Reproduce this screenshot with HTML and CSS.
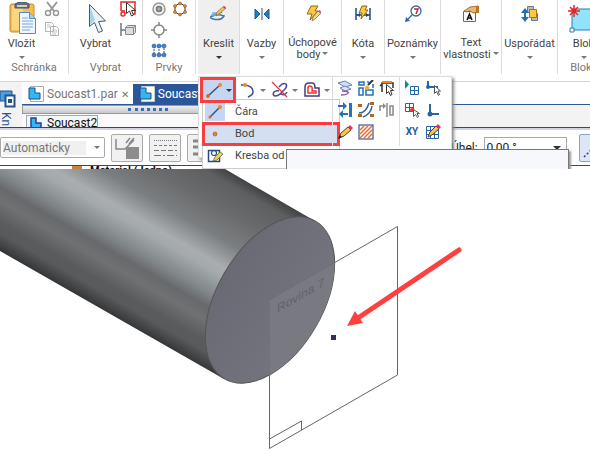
FILE: index.html
```html
<!DOCTYPE html>
<html lang="cs">
<head>
    <meta charset="UTF-8">
    <title>Soucast2</title>
    <link rel="stylesheet" href="styles.css">
</head>
<body>
    <div class="chrome">
        <div class="ribbon">
            <div class="group clipboard">
                <div class="group-body">
                    <button class="big">
                        <svg width="32" height="32" viewBox="0 0 32 32">
                            <rect x="4" y="2" width="24" height="28" rx="2" fill="#f5bd55" stroke="#c98a2c"/>
                            <rect x="6" y="4" width="11" height="24" fill="#fbd680"/>
                            <path d="M9 6V2l4-2h6l4 2v4z" fill="#66707c" stroke="#4c5560"/>
                            <path d="M11 4h10" stroke="#c8d0d8" stroke-width="2"/>
                            <path d="M13.500 10.500h10l6 6v15h-16z" fill="#eef6ff" stroke="#4d8ecb"/>
                            <path d="M23.500 10.500v6h6" fill="#a9cdf0" stroke="#4d8ecb"/>
                            <path d="M16 16h6M16 19h11M16 22h11M16 25h11M16 28h8" stroke="#7ba9dc"/>
                        </svg>
                        <span>Vložit</span>
                        <i class="caret"></i>
                    </button>
                    <div class="smalls">
                        <button aria-label="Vyjmout"><svg width="16" height="16" viewBox="0 0 16 16"><path d="M3 1l7 9M13 1l-7 9" stroke="#999" stroke-width="2"/><circle cx="4" cy="12" r="2.500" fill="none" stroke="#999" stroke-width="1.500"/><circle cx="12" cy="12" r="2.500" fill="none" stroke="#999" stroke-width="1.500"/></svg></button>
                        <button aria-label="Kopírovat"><svg width="16" height="16" viewBox="0 0 16 16"><path d="M1.500 1.500h6l2 2v7h-8zM6.500 5.500h6l2 2v7h-8z" fill="#fff" stroke="#b4b4b4"/><path d="M3 4h3M3 6h3M8 9h5M8 11h5M8 13h4" stroke="#c4c4c4"/></svg></button>
                    </div>
                </div>
                <div class="caption">Schránka</div>
            </div>
            <div class="group choose">
                <div class="group-body">
                    <button class="big">
                        <svg width="32" height="32" viewBox="0 0 32 32"><path d="M9.500 2.500v22l5-4 4 10 4-1.500-4-9.500 7-.5z" fill="#eaf4fa" stroke="#4b5a66"/><path d="M10 4v19l5-5z" fill="#a8d4e8"/></svg>
                        <span>Vybrat</span>
                    </button>
                    <div class="smalls">
                        <button aria-label="Filtr výběru"><svg width="16" height="16" viewBox="0 0 16 16"><path d="M1 10V1h14v12h-3M1 10h4" fill="none" stroke="#e22" stroke-width="1.500"/><circle cx="3" cy="13" r="2" fill="none" stroke="#e22" stroke-width="1.500"/><path d="M6.500 1.500v11l3-2.500 2 5 2-1-2-4.500h4z" fill="#fff" stroke="#333"/></svg></button>
                        <button aria-label="Výběr plochy"><svg width="16" height="16" viewBox="0 0 16 16"><path d="M1 2v13M1 9h5" stroke="#777" stroke-width="1.500"/><path d="M5.500 6.500l2-2h8v7l-2 2h-8z" fill="#ddd" stroke="#888"/><path d="M5.500 6.500h8v7M13.500 6.500l2-2" fill="none" stroke="#888"/></svg></button>
                    </div>
                </div>
                <div class="caption">Vybrat</div>
            </div>
            <div class="group features">
                <div class="group-body feature-grid">
                    <button aria-label="Tělesa"><svg width="16" height="16" viewBox="0 0 16 16"><circle cx="8" cy="8" r="6" fill="#f0f0f0" stroke="#999" stroke-width="1.500"/><circle cx="8" cy="8" r="2.500" fill="#aaa" stroke="#777" stroke-width="1.500"/></svg></button>
                    <button aria-label="Vrcholy"><svg width="16" height="16" viewBox="0 0 16 16"><path d="M8 2l5 3v6l-5 3-5-3V5z" fill="none" stroke="#333"/><g fill="#e8862c" stroke="#8a4a12" stroke-width=".5"><circle cx="8" cy="2.500" r="1.500"/><circle cx="13" cy="5" r="1.500"/><circle cx="13" cy="11" r="1.500"/><circle cx="8" cy="13.500" r="1.500"/><circle cx="3" cy="11" r="1.500"/><circle cx="3" cy="5" r="1.500"/></g></svg></button>
                    <button aria-label="Střed"><svg width="16" height="16" viewBox="0 0 16 16"><circle cx="8" cy="8" r="5" fill="none" stroke="#888" stroke-width="1.500"/><path d="M8 0v4M8 12v4M0 8h4M12 8h4" stroke="#888" stroke-width="1.500"/></svg></button>
                    <span></span>
                    <button aria-label="Síť bodů"><svg width="16" height="16" viewBox="0 0 16 16"><path d="M3 3h10v9H3zM8 3v9" fill="none" stroke="#357" stroke-dasharray="2 1"/><g fill="#3f82d0" stroke="#1c4a8c" stroke-width=".5"><circle cx="3" cy="3" r="2"/><circle cx="8" cy="3" r="2"/><circle cx="13" cy="3" r="2"/><circle cx="3" cy="12" r="2"/><circle cx="8" cy="12" r="2"/><circle cx="13" cy="12" r="2"/></g></svg></button>
                </div>
                <div class="caption">Prvky</div>
            </div>
            <div class="group draw">
                <button class="tool">
                    <svg width="18" height="18" viewBox="0 0 18 18"><path d="M1 12q5-4 13-1-3 5-11 3t9-7" fill="none" stroke="#3a78b8" stroke-width="1.500"/><path d="M2 8h6M1 10h5" stroke="#7fb0dc" stroke-width="1.500"/><path d="M6 11l1-4 7-6 2 2-7 6z" fill="#f4c451" stroke="#8a6a30" stroke-width=".7"/><path d="M13 2l1-1 2 2-1 1z" fill="#e0368c"/></svg>
                    <span>Kreslit</span>
                    <i class="caret dark"></i>
                </button>
                <div class="popup">
                    <div class="splits">
                        <button class="split marked" aria-label="Čára"><svg width="18" height="18" viewBox="0 0 18 18"><path d="M3 15L15 4" stroke="#3a4a8c" stroke-width="1.500"/><circle cx="3" cy="15" r="2" fill="#d9701c"/><circle cx="15" cy="4" r="2" fill="#ef8a28"/></svg><i class="caret dark"></i></button>
                        <button class="split" aria-label="Oblouk"><svg width="18" height="18" viewBox="0 0 18 18"><path d="M2 4h4q8 1 8 7 0 3-5 5" fill="none" stroke="#4a4a90" stroke-width="1.500"/><circle cx="6" cy="4" r="2" fill="#f08a24"/></svg><i class="caret"></i></button>
                        <button class="split" aria-label="Křivka"><svg width="18" height="18" viewBox="0 0 18 18"><path d="M8 6q4-5 7-3 2 3-3 7-4 5-8 5-3-1-1-4 2-2 5-1M10 13q4 2 6-2" fill="none" stroke="#4a4a90" stroke-width="1.500"/><path d="M1 1l15 15" stroke="#e33" stroke-width="1.200"/></svg><i class="caret"></i></button>
                        <button class="split" aria-label="Odsazení"><svg width="18" height="18" viewBox="0 0 18 18"><path d="M2 15V6q0-4 4-4h3q3 0 3 5h4v8z" fill="none" stroke="#4a3a80" stroke-width="1.500"/><path d="M5 12V7q0-2 2-2 3 0 2 5h4v2z" fill="none" stroke="#e33" stroke-width="1.500"/></svg><i class="caret"></i></button>
                    </div>
                    <div class="grid three">
                        <button aria-label="Promítnout"><svg width="16" height="16" viewBox="0 0 16 16"><path d="M1 3l7-2 7 4-7 2z" fill="#cfe0f2" stroke="#6484b4"/><path d="M3 8l5-2 6 3-6 2z" fill="#dce8f6" stroke="#6484b4"/><path d="M5 11q7 0 6 2t-7 2" fill="none" stroke="#9655a8" stroke-width="1.500"/></svg></button>
                        <button aria-label="Zahrnout"><svg width="16" height="16" viewBox="0 0 16 16"><path d="M1 2h5v3H1zM1 8h4v7H1zM8 10h7v5H8z" fill="none" stroke="#2473b8" stroke-width="1.500"/><path d="M6 8l3-3 3 3-3 2z" fill="#f0b13a"/><path d="M10 5l5-5" stroke="#333" stroke-width="2"/><path d="M9 2h2M15 4v4" fill="none" stroke="#2473b8" stroke-width="1.500"/></svg></button>
                        <button aria-label="Oříznout"><svg width="16" height="16" viewBox="0 0 16 16"><path d="M3 12V3h11v5M1 6l4-4" fill="none" stroke="#333" stroke-width="1.500"/><path d="M3 2h10" stroke="#e8862c" stroke-width="2"/><path d="M7.500 4.500v9l2-2 2 4 1.500-1-1.500-4h3z" fill="#fff" stroke="#333"/></svg></button>
                        <button aria-label="Symetrie"><svg width="16" height="16" viewBox="0 0 16 16"><path d="M12 1h3v14h-3z" fill="#2473b8"/><path d="M1 4h6M4 12h7" stroke="#2473b8" stroke-width="2"/><path d="M6 0v8l4-4zM6 8v8l-4-4z" fill="#2473b8"/></svg></button>
                        <button aria-label="Posunout"><svg width="16" height="16" viewBox="0 0 16 16"><path d="M1 11q7 0 10-10M5 15q8-3 9-11" fill="none" stroke="#2864a8" stroke-width="1.500"/><path d="M0 2h4v3H0zM12 0h4v3h-4zM0 12h4v3H0zM12 12h4v3h-4z" fill="#a66a24"/></svg></button>
                        <button aria-label="Zrcadlit"><svg width="16" height="16" viewBox="0 0 16 16"><path d="M8 1v14" stroke="#888" stroke-width="1.500"/><path d="M1 9V4h4M11 4h3v9h-3z" fill="none" stroke="#888" stroke-width="1.500"/><path d="M4 1l3 3-3 3z" fill="#888"/></svg></button>
                        <button aria-label="Tužka"><svg width="16" height="16" viewBox="0 0 16 16"><path d="M2 14l2-5 7-6 3 3-7 6z" fill="#f4c451" stroke="#5c4218"/><path d="M11 3l2-2 3 3-2 2z" fill="#e82a78"/><path d="M1 15l1.500-4L5 13z" fill="#222"/></svg></button>
                        <button aria-label="Výplň"><svg width="16" height="16" viewBox="0 0 16 16"><rect x="1" y="1" width="14" height="14" fill="#fff4ec" stroke="#3a5a9a" stroke-width="1.200"/><path d="M2 6l4-4M2 10l8-8M2 14L14 2M6 14l8-8M10 14l4-4" stroke="#e06a30" stroke-width="1.300"/></svg></button>
                    </div>
                    <div class="grid two">
                        <button aria-label="Zarovnat na mřížku"><svg width="16" height="16" viewBox="0 0 16 16"><path d="M1 0v9l4-4.500z" fill="#138a8a"/><path d="M6.500 6.500h8v8h-8zM10.500 6.500v8M6.500 10.500h8" fill="none" stroke="#2864a8"/></svg></button>
                        <button aria-label="Počátek"><svg width="16" height="16" viewBox="0 0 16 16"><path d="M3 1v6h10" fill="none" stroke="#2864a8" stroke-width="2"/><circle cx="3" cy="7" r="2" fill="#2864a8"/><path d="M9.500 5.500v8l2-2 2 4 1-1-1.500-3.500h2.500z" fill="#fff" stroke="#555"/></svg></button>
                        <button aria-label="Mřížka"><svg width="16" height="16" viewBox="0 0 16 16"><path d="M1.500 1.500h8v8h-8zM5.500 1.500v8M1.500 5.500h8" fill="none" stroke="#2864a8"/><circle cx="8" cy="8" r="2" fill="#e33"/><path d="M9.500 7.500v7l2-2 2 3 1-1-1.500-3h2.500z" fill="#fff" stroke="#555"/></svg></button>
                        <button aria-label="Nulový bod"><svg width="16" height="16" viewBox="0 0 16 16"><path d="M5 2v10h9" fill="none" stroke="#2864a8" stroke-width="2"/><circle cx="5" cy="12" r="2.500" fill="#2864a8"/></svg></button>
                        <button class="xy">XY</button>
                        <button aria-label="Upravit mřížku"><svg width="16" height="16" viewBox="0 0 16 16"><path d="M1.500 2.500h12v12h-12zM5.500 2.500v12M9.500 2.500v12M1.500 6.500h12M1.500 10.500h12" fill="none" stroke="#2864a8"/><path d="M3 13l2-5 6-6 3 3-7 6z" fill="#f4c451" stroke="#5c4218"/><path d="M11 2l2-2 3 3-2 2z" fill="#e82a78"/></svg></button>
                    </div>
                    <div class="menu">
                        <button class="item"><span class="item-icon lit"><svg width="18" height="18" viewBox="0 0 18 18"><path d="M4 14L14 4" stroke="#3a4a8c" stroke-width="1.500"/><circle cx="4" cy="14" r="1.500" fill="#d9701c"/><circle cx="14" cy="4" r="2" fill="#ef8a28"/></svg></span>Čára</button>
                        <button class="item marked"><span class="item-icon"><svg width="18" height="18" viewBox="0 0 18 18"><circle cx="9" cy="9" r="2" fill="#d9853c" stroke="#a3541c" stroke-width=".6"/></svg></span>Bod</button>
                        <button class="item"><span class="item-icon"><svg width="18" height="18" viewBox="0 0 18 18"><path d="M2.500 3.500h11v11h-11z" fill="#fff" stroke="#274b80" stroke-width="1.500"/><circle cx="8" cy="6" r="2.500" fill="none" stroke="#274b80" stroke-width="1.200"/><path d="M7 14l2-4 5-5 3 2-6 6z" fill="#f0d24c" stroke="#555" stroke-width=".7"/></svg></span>Kresba od ruky</button>
                    </div>
                </div>
            </div>
            <div class="group relate">
                <button class="tool">
                    <svg width="18" height="18" viewBox="0 0 18 18"><path d="M2 4v10l5-5z" fill="#1c7fc4" stroke="#27548c"/><path d="M16 4v10l-5-5z" fill="#1c7fc4" stroke="#27548c"/><path d="M9 3v12" stroke="#27548c"/></svg>
                    <span>Vazby</span>
                    <i class="caret"></i>
                </button>
            </div>
            <div class="group snap">
                <button class="tool two-line">
                    <svg width="18" height="18" viewBox="0 0 18 18"><path d="M7 1h7l-3 5h3l-8 9 2-6H3z" fill="#ffc83a" stroke="#8c6a20"/><path d="M8 16l1-4 5-6 3 2-6 6z" fill="#f7d58c" stroke="#8a6a50" stroke-width=".8"/><path d="M14 6l2-1 1 2-1 1z" fill="#d84a68"/></svg>
                    <span>Úchopové<br>body<i class="caret"></i></span>
                </button>
            </div>
            <div class="group dim">
                <button class="tool">
                    <svg width="18" height="18" viewBox="0 0 18 18"><path d="M2 3v12M16 3v12M2 10h14" stroke="#1c4a80" stroke-width="1.500"/><path d="M3 10l3-2v4zM15 10l-3-2v4z" fill="#1c4a80"/><path d="M8 1h5l-2 4h3l-7 9 1-6H5z" fill="#ffc83a" stroke="#8c6a20"/></svg>
                    <span>Kóta</span>
                    <i class="caret"></i>
                </button>
            </div>
            <div class="group notes">
                <button class="tool">
                    <svg width="18" height="18" viewBox="0 0 18 18"><circle cx="12" cy="6" r="5" fill="#fff" stroke="#2c68ac" stroke-width="1.300"/><path d="M8 10l-6 6" stroke="#2c68ac" stroke-width="1.300"/><path d="M1 17l1-5 4 4z" fill="#2c68ac"/><path d="M10 4h4l-2 5" fill="none" stroke="#c22" stroke-width="1.500"/></svg>
                    <span>Poznámky</span>
                    <i class="caret"></i>
                </button>
            </div>
            <div class="group textprops">
                <button class="tool two-line">
                    <svg width="18" height="18" viewBox="0 0 18 18"><path d="M1.500 6.500h12v10h-12z" fill="#fff" stroke="#2c78b8"/><path d="M2 6l6-4 8-1v6l-5 1-3-2-4 1z" fill="#eab676" stroke="#8a5a28" stroke-width=".8"/><path d="M14 1h3v7h-3z" fill="#b87824"/><path d="M5 15l2.500-6L10 15M6 13h3" fill="none" stroke="#111" stroke-width="1.500"/></svg>
                    <span>Text<br>vlastnosti<i class="caret"></i></span>
                </button>
            </div>
            <div class="group arrange">
                <button class="tool">
                    <svg width="18" height="18" viewBox="0 0 18 18"><path d="M6.500 1.500h6v6h-6zM12.500 8.500h4v7h-6v-3" fill="#bbb" stroke="#777"/><path d="M8.500 4.500h7v8h-7z" fill="#ffcc3c" stroke="#a07414"/><path d="M4 6v8" stroke="#2272c0" stroke-width="2"/><path d="M0 8l4-5 4 5zM0 12l4 5 4-5z" fill="#2272c0"/></svg>
                    <span>Uspořádat</span>
                    <i class="caret"></i>
                </button>
            </div>
            <div class="group blocks">
                <button class="tool">
                    <svg width="34" height="30" viewBox="0 0 34 30"><path d="M5 4h28v21H5z" fill="#8fe4fb" stroke="#2c78b8"/><path d="M3 23h4v4H3z" fill="#fff" stroke="#2c78b8"/><path d="M7 0v12M1 6h12M3 2l8 8M11 2l-8 8" stroke="#e22" stroke-width="1.500"/></svg>
                    <span>Blok</span>
                    <i class="caret"></i>
                </button>
                <div class="caption">Bloky</div>
            </div>
        </div>

        <div class="workspace">
            <div class="side">
                <svg width="16" height="18" viewBox="0 0 16 18"><path d="M0 1h12v10H0z" fill="#4b9fe0" stroke="#24508c"/><path d="M5.500 5.500h9v11h-9z" fill="#fff" stroke="#24508c" stroke-width="2"/><path d="M8 9h4v4H8z" fill="#24508c"/></svg>
                <span>Knihovna</span>
            </div>
            <div class="docs">
                <div class="tabs">
                    <button class="tab"><svg width="16" height="16" viewBox="0 0 16 16"><path d="M2.500 .5h13v15h-13z" fill="#fff" stroke="#aaa"/><path d="M1 2h6v5h5v6H1z" fill="#35b5f2" stroke="#1c4d8c"/></svg>Soucast1.par<span class="close">✕</span></button>
                    <button class="tab active"><svg width="16" height="16" viewBox="0 0 16 16"><path d="M2.500 .5h13v15h-13z" fill="#fff" stroke="#ccc"/><path d="M1 2h6v5h5v6H1z" fill="#35b5f2" stroke="#1c4d8c"/></svg>Soucast2.par</button>
                </div>
                <div class="dock">
                    <div class="grip"></div>
                    <div class="doc-name"><span><svg width="12" height="12" viewBox="0 0 12 12"><path d="M1 1h5v5h5v6H1z" fill="#35b5f2" stroke="#2a3f9c" stroke-width="1.500"/></svg>Soucast2</span></div>
                </div>
            </div>
        </div>

        <div class="options">
            <label class="combo auto"><select disabled aria-label="Styl"><option>Automaticky</option></select><i class="caret"></i></label>
            <button class="option" aria-label="Barva čáry"><svg width="26" height="24" viewBox="0 0 26 24"><path d="M2 3v10h9l9-9M12 7l4-5M15 8l5-6" fill="none" stroke="#888" stroke-width="1.500"/><path d="M12 11h13v12H12z" fill="#8c8c8c"/></svg></button>
            <button class="option" aria-label="Typ čáry"><svg width="26" height="24" viewBox="0 0 26 24"><path d="M2 4.500h23" stroke="#777" stroke-dasharray="1 1"/><path d="M2 9.500h23" stroke="#777" stroke-dasharray="3 2"/><path d="M2 14.500h23" stroke="#777" stroke-dasharray="5 2"/><path d="M2 19.500h23" stroke="#777" stroke-dasharray="7 2 2 2"/></svg></button>
            <button class="option" aria-label="Šířka čáry"><svg width="26" height="24" viewBox="0 0 26 24"><path d="M3 5h20M3 11h20M3 18h20" stroke="#888" stroke-width="3"/></svg></button>
            <label class="angle" for="angle">Úhel:</label>
            <span class="combo degrees"><select id="angle"><option>0,00 °</option></select><i class="caret dark"></i></span>
            <button class="option snapto" aria-label="Promítnutí"><svg width="26" height="24" viewBox="0 0 26 24"><path d="M2 21L20 3" stroke="#24408c" stroke-width="1.500" stroke-dasharray="2 2"/></svg></button>
        </div>
        <div class="tree"><i></i>Material (Jedno)</div>

        <div class="tooltip"></div>
    </div>

    <svg class="scene" viewBox="0 0 590 282" preserveAspectRatio="xMinYMin meet">
        <defs>
            <linearGradient id="metal" gradientUnits="userSpaceOnUse" x1="315" y1="52" x2="224" y2="210">
                <stop offset="0" stop-color="#414243"/>
                <stop offset=".06" stop-color="#5e5f60"/>
                <stop offset=".2" stop-color="#6a6b6d"/>
                <stop offset=".34" stop-color="#7b7e80"/>
                <stop offset=".47" stop-color="#a9adb0"/>
                <stop offset=".52" stop-color="#a4a9ab"/>
                <stop offset=".64" stop-color="#7f8487"/>
                <stop offset=".7" stop-color="#68696c"/>
                <stop offset=".77" stop-color="#707172"/>
                <stop offset=".87" stop-color="#5a5b5c"/>
                <stop offset=".92" stop-color="#595a5b"/>
                <stop offset="1" stop-color="#363738"/>
            </linearGradient>
            <linearGradient id="face" x1="0" y1="0" x2="0" y2="1">
                <stop offset="0" stop-color="#696a73"/>
                <stop offset="1" stop-color="#74757f"/>
            </linearGradient>
            <clipPath id="disc"><ellipse cx="270" cy="131" rx="91" ry="53" transform="rotate(-60 270 131)"/></clipPath>
        </defs>
        <path d="M0 0H225L315 52L224 210L0 82Z" fill="url(#metal)"/>
        <ellipse cx="270" cy="131" rx="91" ry="53" transform="rotate(-60 270 131)" fill="url(#face)" stroke="#555"/>
        <path d="M397.500 57.500V206L269.500 279.500V131Z" fill="none" stroke="#666"/>
        <path d="M269.500 270L301.500 252V261" fill="none" stroke="#666"/>
        <g clip-path="url(#disc)">
            <path d="M397.500 57.500V206L269.500 279.500V131Z" fill="#787981" stroke="#747474"/>
            <text class="plane-name" transform="translate(277 144) skewY(-30)">Rovina 7</text>
        </g>
        <path d="M331 166h5v5h-5z" fill="#332e66"/>
        <path d="M459 81L358 149" stroke="#ff4040" stroke-width="5" stroke-linecap="round"/>
        <path d="M347 157l8-15 8 12z" fill="#ff4040"/>
    </svg>
</body>
</html>
```
FILE: styles.css
```css
body {
    font-family: Roboto, "Liberation Sans", sans-serif;
    font-size: 12px;
    margin: 0;
    color: #444;
    background: white;
    overflow: hidden;
}
button {
    font: inherit;
    color: inherit;
    background: none;
    border: 0;
    padding: 0;
}
svg {
    display: block;
    flex: none;
}
.chrome {
    position: relative;
    overflow: hidden;
}
.caret {
    display: inline-block;
    border: 3px solid transparent;
    border-top-color: #777;
    border-bottom: 0;
}
.caret.dark {
    border-top-color: #333;
}

/* ribbon */
.ribbon {
    display: flex;
    height: 81px;
    border-bottom: 1px solid #d5d5d5;
    font-size: 11px;
    line-height: 12px;
}
.group {
    position: relative;
    box-sizing: border-box;
    flex: none;
    height: 74px;
    border-right: 1px solid #dcdcdc;
    text-align: center;
}
.group-body {
    display: flex;
    height: 62px;
}
.caption {
    color: #777;
}
.big, .tool {
    display: flex;
    flex-direction: column;
    align-items: center;
}
.big {
    padding-top: 2px;
    width: 43px;
}
.big span {
    margin: 4px 0 6px;
}
.smalls {
    display: flex;
    flex-direction: column;
    gap: 4px;
    padding: 1px;
}
.clipboard {
    width: 69px;
}
.choose {
    width: 74px;
}
.choose .big {
    width: 50px;
    padding-left: 3px;
}
.features {
    width: 53px;
    margin-right: 2px;
}
.feature-grid {
    display: grid;
    grid-template-columns: 16px 16px;
    grid-auto-rows: 16px;
    gap: 5px;
    padding: 1px 8px 0;
    box-sizing: border-box;
}
.tool {
    width: 100%;
    height: 62px;
    padding-top: 5px;
}
.tool span {
    margin: 15px 0 6px;
}
.two-line span {
    margin: 14px 0 0;
}
.tool span .caret {
    margin: 0 0 3px 2px;
}
.draw {
    width: 42px;
    background: #efefef;
}
.relate {
    width: 44px;
}
.snap {
    width: 58px;
}
.dim {
    width: 43px;
}
.notes {
    width: 56px;
}
.textprops {
    width: 61px;
}
.arrange {
    width: 56px;
}
.blocks {
    width: 52px;
}
.blocks .tool span {
    margin-top: 3px;
}

/* drawing popup */
.popup {
    position: absolute;
    z-index: 2;
    top: 76px;
    left: 0;
    display: flex;
    width: 252px;
    height: 80px;
    background: white;
    border: 1px solid #ddd;
    box-shadow: 2px 2px 3px #888;
}
.splits {
    display: flex;
    height: 26px;
    padding-left: 1px;
}
.split {
    display: flex;
    align-items: center;
    justify-content: center;
    gap: 3px;
    width: 32px;
}
.split.marked {
    width: 36px;
    background: #c4d6f2;
    border: 3px solid #f83e3e;
    box-sizing: border-box;
}
.grid {
    display: grid;
    grid-auto-rows: 16px;
    gap: 6px 5px;
    height: 60px;
    padding: 3px 4px 6px;
    border-left: 1px solid #ddd;
}
.three {
    grid-template-columns: 16px 16px 16px;
}
.two {
    grid-template-columns: 16px 16px;
}
.xy {
    color: #2c5aa0;
    font-size: 10px;
    font-weight: bold;
}
.menu {
    position: absolute;
    top: 22px;
    left: 3px;
    z-index: -1;
    width: 136px;
    padding: 1px 0;
    background: white;
    border: 1px solid #ccc;
}
.item {
    display: flex;
    align-items: center;
    width: 100%;
    height: 22px;
    white-space: nowrap;
}
.item-icon {
    display: flex;
    justify-content: center;
    width: 20px;
    margin: 0 10px 0 2px;
}
.item-icon.lit {
    background: #c4d6f2;
}
.item.marked {
    background: #d4dff1;
    outline: 3px solid #f83e3e;
    outline-offset: -2px;
}

/* documents */
.workspace {
    display: flex;
    height: 45px;
    border-bottom: 1px solid #2c4a6c;
    overflow: hidden;
}
.side {
    width: 22px;
    padding-top: 8px;
    box-sizing: border-box;
    background: #f3f3f3;
    color: #2b579a;
}
.side span {
    margin-top: 4px;
    line-height: 12px;
    writing-mode: vertical-rl;
}
.docs {
    flex: 1;
    background: #f3f3f3;
}
.tabs {
    display: flex;
    height: 20px;
    padding-top: 2px;
    background: white;
    border-bottom: 1px solid #2b579a;
}
.tab {
    display: flex;
    align-items: center;
    gap: 3px;
    padding: 0 4px 0 6px;
    color: #777;
}
.tab.active {
    background: #2b579a;
    color: white;
}
.close {
    font-size: 10px;
}
.dock {
    width: 250px;
}
.grip {
    height: 7px;
    border: 1px solid #999;
    background: linear-gradient(#eee, #c8c8c8);
}
.grip::after {
    content: "";
    display: block;
    width: 40px;
    margin-left: 105px;
    padding-top: 2px;
    border-bottom: 3px dotted #3a6fb8;
}
.doc-name {
    padding: 1px 4px 0;
    background: #fafafa;
    color: #111;
}
.doc-name span {
    display: flex;
    align-items: center;
    gap: 5px;
    width: 67px;
    padding-left: 3px;
    line-height: 14px;
    background: #f2f8fa;
    border: 1px solid #9ab;
}

/* option bar */
.options {
    display: flex;
    align-items: center;
    gap: 6px;
    height: 35px;
    border-top: 2px solid #cfd3e2;
    border-bottom: 1px solid #2c4a6c;
    overflow: hidden;
}
.combo {
    display: flex;
    flex: none;
    align-items: center;
    box-sizing: border-box;
    height: 21px;
    padding: 0 4px 0 2px;
    border: 1px solid #aaa;
}
.combo select {
    flex: 1;
    appearance: none;
    padding: 0;
    border: 0;
    background: none;
    color: #222;
    font: inherit;
}
.auto {
    width: 105px;
    border-radius: 2px;
}
.auto select {
    background: #f0f0f0;
    color: #777;
    margin-right: 8px;
    opacity: 1;
}
.option {
    display: flex;
    align-items: center;
    justify-content: center;
    flex: none;
    box-sizing: border-box;
    width: 32px;
    height: 28px;
    background: #f1f1f1;
    border: 1px solid #aaa;
    border-radius: 2px;
}
.angle {
    margin-left: 226px;
    color: #222;
}
.degrees {
    width: 83px;
}
.degrees .caret {
    border-width: 4px;
    border-bottom: 0;
    margin-right: 1px;
}
.snapto {
    margin-left: 6px;
    background: #dde6f4;
    border-color: #8ba3c8;
}
.tree {
    display: flex;
    height: 3px;
    padding-left: 72px;
    gap: 8px;
    overflow: hidden;
    color: #111;
    font-size: 11px;
    font-weight: bold;
    line-height: 9px;
}
.tree i {
    flex: none;
    width: 10px;
    height: 3px;
    background: #c9823c;
}
.tooltip {
    position: absolute;
    z-index: 3;
    top: 149px;
    left: 286px;
    width: 281px;
    height: 30px;
    background: #f7f8fc;
    border: 1px solid #777;
    box-shadow: 2px 2px 2px #999;
}

/* model view */
.scene {
    width: 100%;
}
.plane-name {
    font: 12px "Liberation Sans", sans-serif;
    fill: #63636a;
}
```
